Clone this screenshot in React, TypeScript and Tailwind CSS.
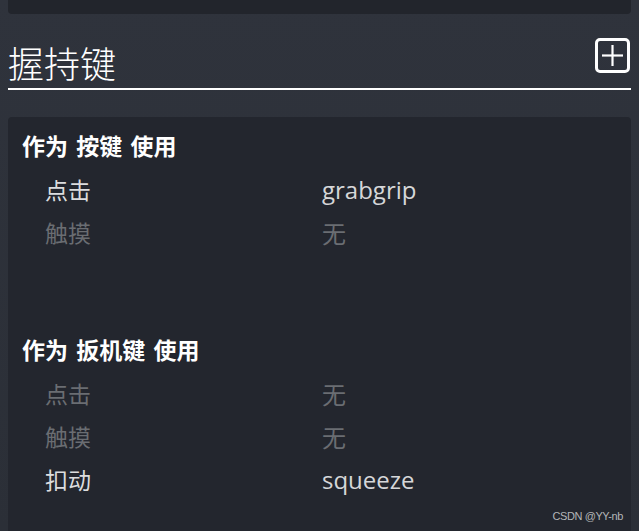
import React from "react";

const cjk = { fontFamily: '"Noto Sans CJK SC", "Noto Sans", sans-serif' };
const latin = { fontFamily: '"Open Sans", "Noto Sans CJK SC", sans-serif' };

type Row = { label: string; value: string; active: boolean };

function Section({ title, rows }: { title: string; rows: Row[] }) {
  return (
    <div>
      <div className="text-[23px] font-bold leading-[30px] text-white [word-spacing:3px]" style={cjk}>
        {title}
      </div>
      <div className="mt-[8px] flex flex-col">
        {rows.map((r, i) => (
          <div key={i} className="flex h-[43px] items-center pl-[23px]">
            <div
              className={`w-[277px] text-[23px] ${r.active ? "text-[#dcdddf]" : "text-[#6a6d72]"}`}
              style={cjk}
            >
              {r.label}
            </div>
            <div
              className={`text-[24px] ${r.active ? "text-[#d6d7d9]" : "text-[#6a6d72]"}`}
              style={r.value === "无" ? cjk : latin}
            >
              {r.value}
            </div>
          </div>
        ))}
      </div>
    </div>
  );
}

export default function App() {
  return (
    <div className="relative h-[531px] w-[639px] overflow-hidden bg-gradient-to-b from-[#2f333c] to-[#2b2f37] px-[8px]">
      <div className="h-[14px] rounded-b-[4px] bg-[#22252c]" />
      <div className="flex items-end justify-between border-b-2 border-white pt-[23px]">
        <div className="text-[36px] font-light leading-[51px] text-white" style={cjk}>
          握持键
        </div>
        <div className="mb-[15px] mr-[1px]">
          <svg width="35" height="35" viewBox="0 0 35 35">
            <rect x="1.5" y="1.5" width="32" height="32" rx="3.5" fill="none" stroke="#ffffff" strokeWidth="3" />
            <line x1="17.5" y1="7" x2="17.5" y2="28" stroke="#ffffff" strokeWidth="2.2" />
            <line x1="7" y1="17.5" x2="28" y2="17.5" stroke="#ffffff" strokeWidth="2.2" />
          </svg>
        </div>
      </div>
      <div className="mt-[27px] h-[440px] rounded-t-[4px] bg-[#23262e] pl-[14px] pt-[13px]">
        <Section
          title="作为 按键 使用"
          rows={[
            { label: "点击", value: "grabgrip", active: true },
            { label: "触摸", value: "无", active: false },
          ]}
        />
        <div className="h-[80px]" />
        <Section
          title="作为 扳机键 使用"
          rows={[
            { label: "点击", value: "无", active: false },
            { label: "触摸", value: "无", active: false },
            { label: "扣动", value: "squeeze", active: true },
          ]}
        />
      </div>
      <div
        className="absolute bottom-[8px] right-[16px] text-[11px] leading-[14px] tracking-[-0.4px] text-[#b4b6b8]"
        style={{ fontFamily: '"Liberation Sans", Arial, sans-serif' }}
      >
        CSDN @YY-nb
      </div>
    </div>
  );
}
